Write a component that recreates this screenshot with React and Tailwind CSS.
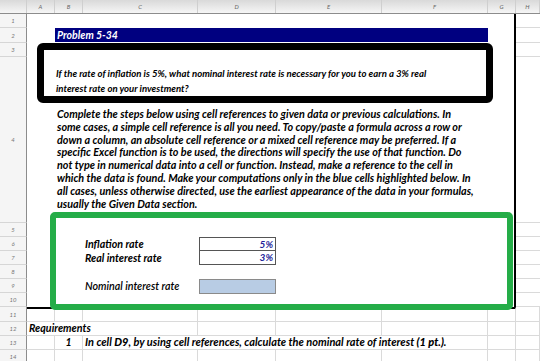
import clsx from 'clsx';

const W = {
  A: 'w-[28px]',
  B: 'w-[28px]',
  C: 'w-[115px]',
  D: 'w-[78px]',
  E: 'w-[106px]',
  F: 'w-[106px]',
  G: 'w-[28px]',
  H: 'w-[24px]',
};
const COLS = ['A', 'B', 'C', 'D', 'E', 'F', 'G', 'H'];

const TOP_ROWS = [
  { n: 1, h: 'h-[14px]' },
  { n: 2, h: 'h-[15px]' },
  { n: 3, h: 'h-[14px]' },
  { n: 4, h: 'h-[166px]' },
  { n: 5, h: 'h-[14px]' },
  { n: 6, h: 'h-[14px]' },
  { n: 7, h: 'h-[14px]' },
  { n: 8, h: 'h-[14px]' },
  { n: 9, h: 'h-[14px]' },
  { n: 10, h: 'h-[14px]' },
];

const PARAGRAPH = [
  'Complete the steps below using cell references to given data or previous calculations. In',
  'some cases, a simple cell reference is all you need. To copy/paste a formula across a row or',
  'down a column, an absolute cell reference or a mixed cell reference may be preferred. If a',
  'specific Excel function is to be used, the directions will specify the use of that function. Do',
  'not type in numerical data into a cell or function. Instead, make a reference to the cell in',
  'which the data is found. Make your computations only in the blue cells highlighted below. In',
  'all cases, unless otherwise directed, use the earliest appearance of the data in your formulas,',
  'usually the Given Data section.',
];

const RowHead = ({ n, h }) => (
  <div
    className={clsx(
      'flex items-center justify-center border-b border-r border-b-[#d6d6d6] border-r-[#8c8c8c] bg-[#f5f5f5] text-[6px] italic text-[#777]',
      h
    )}
  >
    {n}
  </div>
);

const Cell = ({ col, noRight, top, className, children }) => (
  <div
    className={clsx(
      'relative flex h-full shrink-0 items-center whitespace-nowrap border-b border-[#dadada]',
      W[col],
      !noRight && 'border-r',
      top && 'border-t-2 border-t-black',
      className
    )}
  >
    {children}
  </div>
);

const GridRow = ({ n, h, hidden = [], blackTop, children = {} }) => (
  <div className={clsx('flex', h)}>
    <div className="w-[27px] shrink-0">
      <RowHead n={n} h="h-full" />
    </div>
    {COLS.map((c) => (
      <Cell
        key={c}
        col={c}
        noRight={hidden.includes(c)}
        top={blackTop && c !== 'H'}
        className={c === 'B' ? 'justify-center' : ''}
      >
        {children[c]}
      </Cell>
    ))}
  </div>
);

export default function App() {
  return (
    <div className="relative h-[361px] w-[540px] overflow-hidden bg-white font-['Lato','Open_Sans',sans-serif] text-black">
      {/* column headers */}
      <div className="flex h-[14px] border-b border-[#8c8c8c] bg-gradient-to-b from-[#d9d9d9] to-[#f6f6f6]">
        <div className="w-[27px] shrink-0 border-r border-[#cfcfcf]" />
        {COLS.map((c) => (
          <div
            key={c}
            className={clsx(
              'flex shrink-0 items-center justify-center border-r border-[#cfcfcf] text-[6px] italic text-[#666]',
              W[c]
            )}
          >
            {c}
          </div>
        ))}
      </div>

      {/* rows 1-10 */}
      <div className="flex h-[293px]">
        <div className="flex w-[27px] shrink-0 flex-col">
          {TOP_ROWS.map((r) => (
            <RowHead key={r.n} n={r.n} h={r.h} />
          ))}
        </div>

        <div className="relative z-10 w-[489px] shrink-0 border-r-2 border-black">
          <div className="ml-[28px] mt-[14px] h-[14px] w-[433px] bg-[#000080] pl-[2px] text-[10.5px] font-bold italic leading-[14px] text-white">
            Problem 5-34
          </div>

          <div className="ml-[10px] mt-[1px] h-[60px] w-[456px] rounded-[6px] border-[7px] border-black pl-[12px] pt-[17px] text-[9.6px] font-bold italic leading-[14.5px]">
            <div className="whitespace-nowrap">
              If the rate of inflation is 5%, what nominal interest rate is necessary for you to earn a 3% real
            </div>
            <div className="whitespace-nowrap">interest rate on your investment?</div>
          </div>

          <div className="ml-[30px] mt-[5px] h-[104px] text-[10.8px] font-bold italic leading-[12.8px]">
            {PARAGRAPH.map((line) => (
              <div key={line} className="whitespace-nowrap">
                {line}
              </div>
            ))}
          </div>

          <div className="ml-[23px] h-[98px] w-[463px] rounded-[5px] border-[6px] border-[#25ad48] pl-[29px] pt-[19px] text-[10.7px] italic">
            <div className="flex h-[14px] items-center">
              <span className="w-[114px] font-bold">Inflation rate</span>
              <div className="flex h-[14px] w-[77px] items-center justify-end border border-[#555] pr-[2px] text-[10px] font-bold text-[#1f1f9a]">
                5%
              </div>
            </div>
            <div className="flex h-[14px] items-center">
              <span className="w-[114px] font-bold">Real interest rate</span>
              <div className="flex h-[14px] w-[77px] items-center justify-end border border-t-0 border-[#555] pr-[2px] text-[10px] font-bold text-[#1f1f9a]">
                3%
              </div>
            </div>
            <div className="h-[14px]" />
            <div className="flex h-[15px] items-center">
              <span className="w-[114px] font-semibold">Nominal interest rate</span>
              <div className="h-[15px] w-[77px] border border-[#8a8a8a] bg-[#b8cce4]" />
            </div>
          </div>
        </div>

        <div className="flex w-[24px] shrink-0 flex-col">
          {TOP_ROWS.map((r) => (
            <div key={r.n} className={clsx('border-b border-[#dadada]', r.h)} />
          ))}
        </div>
      </div>

      {/* rows 11-14 */}
      <GridRow n={11} h="h-[15px]" blackTop />
      <GridRow n={12} h="h-[14px]" hidden={['A', 'B']}>
        {{
          A: (
            <span className="pl-[2px] text-[10.7px] font-bold italic">Requirements</span>
          ),
        }}
      </GridRow>
      <GridRow n={13} h="h-[14px]" hidden={['C', 'D', 'E']}>
        {{
          B: <span className="text-[10.5px] font-bold italic">1</span>,
          C: (
            <span className="pl-[2px] text-[11px] font-bold italic">
              In cell <span className="font-black">D9</span>, by using cell references, calculate the
              nominal rate of interest <span className="font-black">(1 pt.)</span>.
            </span>
          ),
        }}
      </GridRow>
      <GridRow n={14} h="h-[14px]" />
    </div>
  );
}
